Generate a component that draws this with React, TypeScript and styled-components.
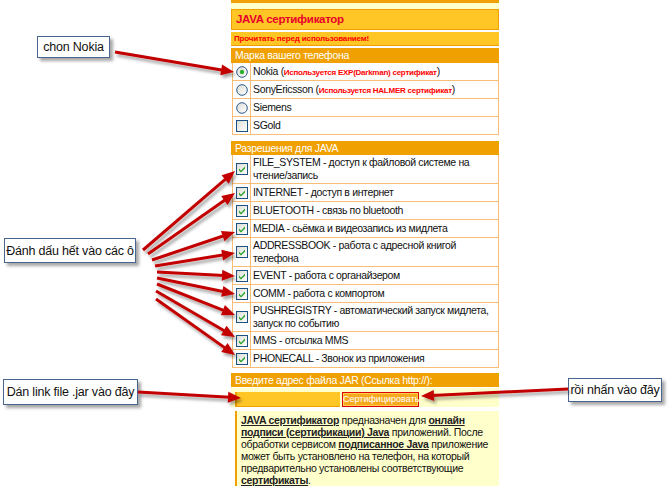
import React, { FC } from 'react'
import styled, { createGlobalStyle } from 'styled-components'

const GlobalStyle = createGlobalStyle`
	html, body {
		margin: 0;
		padding: 0;
		background: #ffffff;
	}
	body {
		font-family: "Liberation Sans", Arial, sans-serif;
	}
`

const ORANGE = '#f0a000'
const GOLD = '#ffc626'
const PALE = '#ffffcc'
const LINE = '#f9bd76'

type Perm = { name: string; text: string }

const brands = [
	{ name: 'Nokia', note: 'Используется EXP(Darkman) сертификат', kind: 'radio', on: true },
	{ name: 'SonyEricsson', note: 'Используется HALMER сертификат', kind: 'radio', on: false },
	{ name: 'Siemens', note: '', kind: 'radio', on: false },
	{ name: 'SGold', note: '', kind: 'box', on: false }
]

const perms: Perm[] = [
	{ name: 'FILE_SYSTEM', text: 'доступ к файловой системе на чтение/запись' },
	{ name: 'INTERNET', text: 'доступ в интернет' },
	{ name: 'BLUETOOTH', text: 'связь по bluetooth' },
	{ name: 'MEDIA', text: 'сьёмка и видеозапись из мидлета' },
	{ name: 'ADDRESSBOOK', text: 'работа с адресной книгой телефона' },
	{ name: 'EVENT', text: 'работа с органайзером' },
	{ name: 'COMM', text: 'работа с компортом' },
	{ name: 'PUSHREGISTRY', text: 'автоматический запуск мидлета, запуск по событию' },
	{ name: 'MMS', text: 'отсылка MMS' },
	{ name: 'PHONECALL', text: 'Звонок из приложения' }
]

// annotation arrows: start x, start y, tip x, tip y
const arrows = [
	[115, 52, 234, 72],
	[143, 250, 235, 171],
	[148, 254, 235, 193],
	[152, 260, 235, 232],
	[155, 266, 235, 253],
	[157, 272, 235, 276],
	[157, 278, 235, 294],
	[157, 284, 235, 315],
	[156, 291, 235, 337],
	[156, 299, 235, 355],
	[138, 392, 241, 398],
	[568, 389, 421, 396]
]

const Arrow: FC<{ a: number[] }> = ({ a }) => {
	const [x1, y1, x2, y2] = a
	const len = Math.hypot(x2 - x1, y2 - y1)
	const ux = (x2 - x1) / len
	const uy = (y2 - y1) / len
	const bx = x2 - ux * 13
	const by = y2 - uy * 13
	const px = -uy * 5.5
	const py = ux * 5.5
	return (
		<g>
			<line x1={x1} y1={y1} x2={bx + ux * 2} y2={by + uy * 2} stroke="#c20000" strokeWidth={3} />
			<polygon points={`${x2},${y2} ${bx + px},${by + py} ${bx - px},${by - py}`} fill="#c20000" />
		</g>
	)
}

const Radio: FC<{ on: boolean }> = ({ on }) => (
	<svg width="12" height="12" viewBox="0 0 12 12">
		<defs>
			<linearGradient id="rg" x1="0" y1="0" x2="1" y2="1">
				<stop offset="0" stopColor="#dcdcd6" />
				<stop offset="1" stopColor="#ffffff" />
			</linearGradient>
		</defs>
		<circle cx="6" cy="6" r="5.3" fill="url(#rg)" stroke="#2b5b8a" strokeWidth="1" />
		{on && <circle cx="6" cy="6" r="2.2" fill="#2eb02e" />}
	</svg>
)

const Check: FC<{ on: boolean }> = ({ on }) => (
	<svg width="12" height="12" viewBox="0 0 12 12">
		<defs>
			<linearGradient id="cg" x1="0" y1="0" x2="1" y2="1">
				<stop offset="0" stopColor="#dcdcd6" />
				<stop offset="1" stopColor="#ffffff" />
			</linearGradient>
		</defs>
		<rect x="0.5" y="0.5" width="11" height="11" fill="url(#cg)" stroke="#1c5180" strokeWidth="1" />
		{on && <path d="M3 5.6 L5 7.8 L9 3.6 L9 5.4 L5 9.4 L3 7.4 Z" fill="#21a121" />}
	</svg>
)

const App: FC = () => {
	return (
		<Page>
			<GlobalStyle />
			<Panel>
				<TopStrip />
				<PaleStrip />
				<TitleBox>JAVA сертификатор</TitleBox>
				<NoticeBox>Прочитать перед использованием!</NoticeBox>
				<SectionHeader $h={15}>Марка вашего телефона</SectionHeader>
				<Table>
					{brands.map(b => (
						<Row key={b.name}>
							<IconCell>{b.kind === 'radio' ? <Radio on={b.on} /> : <Check on={b.on} />}</IconCell>
							<TextCell>
								{b.note ? `${b.name} (` : b.name}
								{b.note && (
									<>
										<Note>{b.note}</Note>)
									</>
								)}
							</TextCell>
						</Row>
					))}
				</Table>
				<SectionHeader $h={14} $gap={6}>Разрешения для JAVA</SectionHeader>
				<Table>
					{perms.map(p => (
						<Row key={p.name}>
							<IconCell>
								<Check on />
							</IconCell>
							<TextCell>{`${p.name} - ${p.text}`}</TextCell>
						</Row>
					))}
				</Table>
				<SectionHeader $h={14} $gap={5}>Введите адрес файла JAR (Ссылка http://):</SectionHeader>
				<InputRow>
					<Field />
					<SubmitButton>Сертифицировать</SubmitButton>
				</InputRow>
				<InfoBox>
					<Strong>JAVA сертификатор</Strong> предназначен для <Strong>онлайн подписи (сертификации) Java</Strong>{' '}
					приложений. После обработки сервисом <Strong>подписанное Java</Strong> приложение может быть
					установлено на телефон, на который предварительно установлены соответствующие{' '}
					<Strong>сертификаты</Strong>.
				</InfoBox>
			</Panel>

			<Callout $x={37} $y={36} $w={73} $h={22}>chon Nokia</Callout>
			<Callout $x={4} $y={238} $w={132} $h={25}>Đánh dấu hết vào các ô</Callout>
			<Callout $x={3} $y={379} $w={135} $h={26}>Dán link file .jar vào đây</Callout>
			<Callout $x={568} $y={378} $w={94} $h={24}>rồi nhấn vào đây</Callout>

			<Overlay width="670" height="486" viewBox="0 0 670 486">
				<defs>
					<filter id="shadow" x="-20%" y="-20%" width="140%" height="140%">
						<feDropShadow dx="2" dy="3" stdDeviation="1.4" floodColor="#000" floodOpacity="0.35" />
					</filter>
				</defs>
				<g filter="url(#shadow)">
					{arrows.map((a, i) => (
						<Arrow key={i} a={a} />
					))}
				</g>
			</Overlay>
		</Page>
	)
}

export default App

const Page = styled.div`
	position: relative;
	width: 670px;
	height: 486px;
	overflow: hidden;
	background: #ffffff;
`

const Panel = styled.div`
	margin-left: 231px;
	width: 268px;
	display: flex;
	flex-direction: column;
	font-size: 11px;
	color: #000;
`

const TopStrip = styled.div`
	height: 3px;
	background: ${ORANGE};
`

const PaleStrip = styled.div`
	height: 6px;
	background: ${PALE};
`

const TitleBox = styled.div`
	height: 19px;
	border: 1px solid ${ORANGE};
	background: ${GOLD};
	color: #e8002c;
	font-weight: bold;
	font-size: 11.5px;
	letter-spacing: -0.3px;
	line-height: 19px;
	padding-left: 4px;
`

const NoticeBox = styled.div`
	margin-top: 2px;
	height: 13px;
	background: ${GOLD};
	border-bottom: 1px solid ${ORANGE};
	color: #ff0000;
	font-weight: bold;
	font-size: 8px;
	letter-spacing: -0.15px;
	line-height: 13px;
	padding-left: 3px;
`

const SectionHeader = styled.div<{ $h: number; $gap?: number }>`
	margin-top: ${({ $gap }) => $gap ?? 2}px;
	height: ${({ $h }) => $h}px;
	line-height: ${({ $h }) => $h}px;
	background: ${ORANGE};
	color: #ffffff;
	font-size: 10.5px;
	letter-spacing: -0.3px;
	padding-left: 4px;
`

const Table = styled.div`
	display: flex;
	flex-direction: column;
	margin-left: 1px;
	border-left: 1px solid ${LINE};
	border-right: 1px solid ${LINE};
	background: #ffffff;
`

const Row = styled.div`
	display: grid;
	grid-template-columns: 18px 1fr;
	min-height: 17px;
	border-bottom: 1px solid ${LINE};
`

const IconCell = styled.div`
	display: flex;
	align-items: center;
	justify-content: center;
	border-right: 1px solid ${LINE};
	padding-left: 1px;

	svg {
		display: block;
	}
`

const TextCell = styled.div`
	align-self: center;
	padding: 1px 4px 1px 2px;
	line-height: 13px;
	font-size: 10.5px;
	letter-spacing: -0.35px;
	color: #111;
`

const Note = styled.span`
	color: #ff0000;
	font-weight: bold;
	font-size: 8px;
	letter-spacing: -0.25px;
`

const InputRow = styled.div`
	margin-top: 1px;
	height: 19px;
	background: ${PALE};
	display: flex;
	align-items: flex-end;
	padding-left: 4px;
`

const Field = styled.div`
	height: 15px;
	width: 98px;
	background: ${GOLD};
	border-left: 2px solid ${ORANGE};
	padding-left: 5px;
	box-shadow: inset 0 -1px 0 ${ORANGE};
`

const SubmitButton = styled.div`
	margin-left: 2px;
	height: 13px;
	width: 75px;
	border: 1px solid #e00000;
	background: #f7a91e;
	color: #ffffff;
	font-size: 9px;
	line-height: 13px;
	text-align: center;
	box-shadow: inset 0 0 0 1px #ffd050;
`

const InfoBox = styled.div`
	margin-top: 4px;
	margin-left: 4px;
	background: ${PALE};
	border-left: 2px solid ${ORANGE};
	padding: 3px 6px 4px 4px;
	font-size: 10.5px;
	letter-spacing: -0.3px;
	line-height: 12px;
	color: #111;
`

const Strong = styled.span`
	font-weight: bold;
	text-decoration: underline;
	color: #222;
`

const Callout = styled.div<{ $x: number; $y: number; $w: number; $h: number }>`
	position: absolute;
	left: ${({ $x }) => $x}px;
	top: ${({ $y }) => $y}px;
	width: ${({ $w }) => $w}px;
	height: ${({ $h }) => $h}px;
	box-sizing: border-box;
	display: flex;
	align-items: center;
	justify-content: center;
	background: #ffffff;
	border: 1px solid #47658f;
	box-shadow: 3px 3px 3px rgba(0, 0, 0, 0.35);
	font-family: "Liberation Sans", Arial, sans-serif;
	font-size: 12.5px;
	letter-spacing: -0.2px;
	color: #111;
	white-space: nowrap;
`

const Overlay = styled.svg`
	position: absolute;
	left: 0;
	top: 0;
	pointer-events: none;
`
